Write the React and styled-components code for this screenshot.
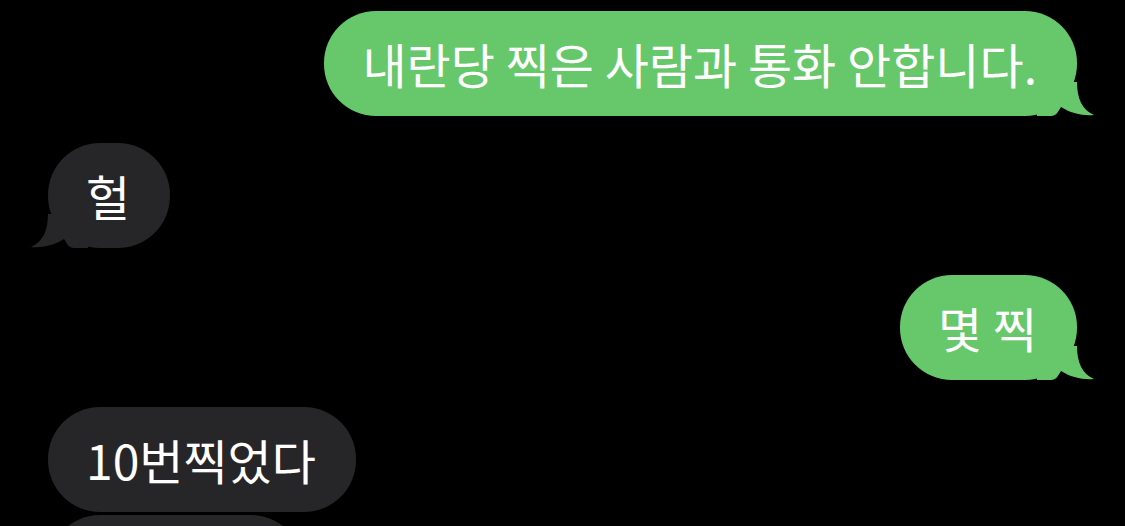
import React from 'react';
import styled, { createGlobalStyle } from 'styled-components';

const Global = createGlobalStyle`
  html, body {
    margin: 0;
    background: #000;
    overflow: hidden;
    height: 100%;
  }
  body {
    font-family: "Noto Sans CJK KR", "Noto Sans", sans-serif;
  }
`;

const Thread = styled.div`
  display: flex;
  flex-direction: column;
  padding: 11px 48px 0;
`;

const Row = styled.div`
  display: flex;
  justify-content: ${p => (p.$me ? 'flex-end' : 'flex-start')};
  margin-top: ${p => (p.$first ? '0' : p.$same ? '3px' : '27px')};
`;

const Bubble = styled.div`
  position: relative;
  height: 105px;
  box-sizing: border-box;
  padding: 0 40px 0 38px;
  display: flex;
  align-items: center;
  border-radius: 52px;
  background: ${p => (p.$me ? '#66c86a' : '#262628')};
  color: #fff;
  font-size: 48px;
  line-height: 53px;
  white-space: nowrap;
`;

const Tail = styled.svg`
  position: absolute;
  bottom: 0;
  width: 57px;
  height: 34px;
  ${p => (p.$me ? 'right: -17px;' : 'left: -17px; transform: scaleX(-1);')}
`;

const BubbleTail = ({ me }) => (
  <Tail $me={me} viewBox="0 0 57 34">
    <path
      d="M0 0 L40 0 C40 16 45 28 57 33 C46 34 33 31 24 25 C21 30 19 34 14 34 L0 34 Z"
      fill={me ? '#66c86a' : '#262628'}
    />
  </Tail>
);

const messages = [
  { me: true, text: '내란당 찍은 사람과 통화 안합니다.', tail: true },
  { me: false, text: '헐', tail: true },
  { me: true, text: '몇 찍', tail: true },
  { me: false, text: '10번찍었다', tail: false },
  { me: false, text: '어쩌라고', tail: true },
];

export default function App() {
  return (
    <>
      <Global />
      <Thread>
        {messages.map((m, i) => (
          <Row
            key={i}
            $me={m.me}
            $first={i === 0}
            $same={i > 0 && messages[i - 1].me === m.me}
          >
            <Bubble $me={m.me}>
              {m.text}
              {m.tail && <BubbleTail me={m.me} />}
            </Bubble>
          </Row>
        ))}
      </Thread>
    </>
  );
}
